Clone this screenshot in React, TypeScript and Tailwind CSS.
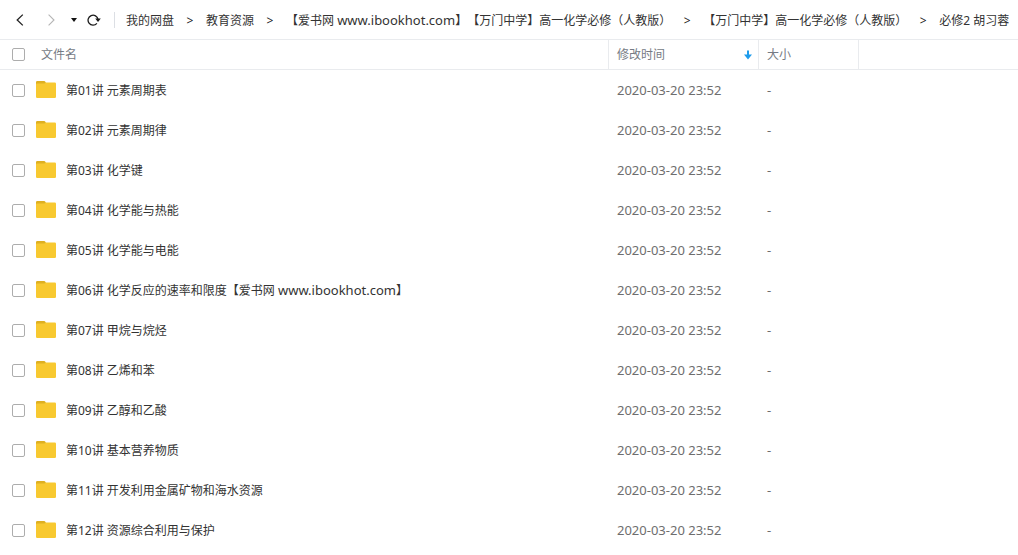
import { useState } from 'react';

type Folder = {
  id: number;
  name: string;
  modified: string;
  size: string;
};

const names = [
  '第01讲 元素周期表',
  '第02讲 元素周期律',
  '第03讲 化学键',
  '第04讲 化学能与热能',
  '第05讲 化学能与电能',
  '第06讲 化学反应的速率和限度【爱书网 www.ibookhot.com】',
  '第07讲 甲烷与烷烃',
  '第08讲 乙烯和苯',
  '第09讲 乙醇和乙酸',
  '第10讲 基本营养物质',
  '第11讲 开发利用金属矿物和海水资源',
  '第12讲 资源综合利用与保护',
];

const folders: Folder[] = names.map((name, i) => ({
  id: i + 1,
  name,
  modified: '2020-03-20 23:52',
  size: '-',
}));

const crumbs = [
  '我的网盘',
  '教育资源',
  '【爱书网 www.ibookhot.com】【万门中学】高一化学必修（人教版）',
  '【万门中学】高一化学必修（人教版）',
  '必修2 胡习蓉',
];

const checkboxClass =
  'block h-[13px] w-[13px] shrink-0 appearance-none rounded-xs border border-[#adadad] bg-white checked:border-[#2196e8] checked:bg-[#2196e8]';

// Site addresses are set a little larger than the Chinese text around them
function Name({ text }: { text: string }) {
  return (
    <span>
      {text.split(/(www\.[a-z.]+)/).map((part, i) =>
        part.startsWith('www.') ? (
          <span key={i} className="text-[13px] leading-none">
            {part}
          </span>
        ) : (
          part
        ),
      )}
    </span>
  );
}

function FolderIcon() {
  return (
    <svg width="20" height="17" viewBox="0 0 20 17" className="block shrink-0" aria-hidden="true">
      <path d="M0 1.2Q0 0 1.2 0H8Q9 0 9.5 1L10.3 2.5V6H0Z" fill="#dfb021" />
      <path d="M0 3.6Q0 2.6 1.2 2.6H8.4L10 1.6H18.8Q20 1.6 20 2.8V15.8Q20 17 18.8 17H1.2Q0 17 0 15.8Z" fill="#f8c930" />
    </svg>
  );
}

function Toolbar() {
  return (
    <div className="flex h-10 items-center border-b border-[#e9ebee] pl-4">
      <button aria-label="后退" className="flex h-6 w-2 items-center">
        <svg width="8" height="12" viewBox="0 0 8 12" fill="none" stroke="#222" strokeWidth="1.3">
          <path d="M6.8 0.6L1.2 6L6.8 11.4" />
        </svg>
      </button>
      <button aria-label="前进" disabled className="ml-6 flex h-6 w-2 items-center">
        <svg width="8" height="12" viewBox="0 0 8 12" fill="none" stroke="#b5b5b5" strokeWidth="1.1">
          <path d="M0.6 0.6L6 6L0.6 11.4" />
        </svg>
      </button>
      <button aria-label="历史记录" className="ml-[15px] flex h-6 w-[6px] items-center">
        <svg width="6" height="4" viewBox="0 0 6 4">
          <path d="M0 0H6L3 4Z" fill="#111" />
        </svg>
      </button>
      <button aria-label="刷新" className="ml-2.5 flex h-6 w-[14px] items-center">
        <svg width="14" height="12" viewBox="0 0 14 12">
          <path d="M9.9 9.4A5 5 0 1 1 11 5.4" fill="none" stroke="#1a1a1a" strokeWidth="1.3" />
          <path d="M8.2 4.6H13.8L11 8Z" fill="#1a1a1a" />
        </svg>
      </button>
      <span className="ml-[13px] h-4 w-px bg-[#dcdfe4]" />
      <nav aria-label="路径" className="ml-[11px] min-w-0 overflow-hidden">
        <ol className="flex items-center gap-3 whitespace-nowrap pt-0.5 text-[#333]">
          {crumbs.map((crumb, i) => (
            <li key={i} className="flex items-center gap-3">
              {i > 0 && <span className="w-2 text-center text-[#222]">&gt;</span>}
              <a href="#">
                <Name text={crumb} />
              </a>
            </li>
          ))}
        </ol>
      </nav>
    </div>
  );
}

export default function App() {
  const [selected, setSelected] = useState<number[]>([]);

  const toggle = (id: number) => {
    setSelected(selected.includes(id) ? selected.filter((s) => s !== id) : [...selected, id]);
  };

  const toggleAll = () => {
    setSelected(selected.length === folders.length ? [] : folders.map((f) => f.id));
  };

  return (
    <div className="min-h-screen bg-white font-['Noto_Sans','Noto_Sans_CJK_SC',sans-serif] text-xs leading-5 [text-spacing-trim:space-all]">
      <Toolbar />
      <table className="w-full table-fixed border-separate border-spacing-0 text-left">
        <colgroup>
          <col />
          <col className="w-[150px]" />
          <col className="w-[100px]" />
          <col className="w-[159px]" />
        </colgroup>
        <thead className="text-[#767b84]">
          <tr className="h-[30px]">
            <th className="border-r border-b border-[#e9ebee] p-0 pl-3 font-normal">
              <div className="flex items-center gap-4">
                <input
                  type="checkbox"
                  aria-label="全选"
                  className={checkboxClass}
                  checked={selected.length === folders.length}
                  onChange={toggleAll}
                />
                <span>文件名</span>
              </div>
            </th>
            <th className="border-r border-b border-[#e9ebee] p-0 pr-1.5 pl-2 font-normal" aria-sort="descending">
              <button className="flex w-full items-center justify-between">
                修改时间
                <svg width="8" height="10" viewBox="0 0 8 10" aria-hidden="true">
                  <path d="M3 0.5H5V4.5H8L4 9.5L0 4.5H3Z" fill="#1e9cec" />
                </svg>
              </button>
            </th>
            <th className="border-r border-b border-[#e9ebee] p-0 pl-2 font-normal">大小</th>
            <th className="border-b border-[#e9ebee] p-0" />
          </tr>
        </thead>
        <tbody>
          {folders.map((folder) => (
            <tr key={folder.id} className="h-10">
              <td className="p-0 pl-3 text-[#333]">
                <label className="flex items-center whitespace-nowrap">
                  <input
                    type="checkbox"
                    className={checkboxClass}
                    checked={selected.includes(folder.id)}
                    onChange={() => toggle(folder.id)}
                  />
                  <span className="mr-2.5 ml-[11px] pb-0.5">
                    <FolderIcon />
                  </span>
                  <span className="pt-0.5">
                    <Name text={folder.name} />
                  </span>
                </label>
              </td>
              <td className="p-0 pl-2 text-[13px] text-[#6e6e6e]">{folder.modified}</td>
              <td className="p-0 pl-2 text-[13px] text-[#6e6e6e]">{folder.size}</td>
              <td className="p-0" />
            </tr>
          ))}
        </tbody>
      </table>
    </div>
  );
}
